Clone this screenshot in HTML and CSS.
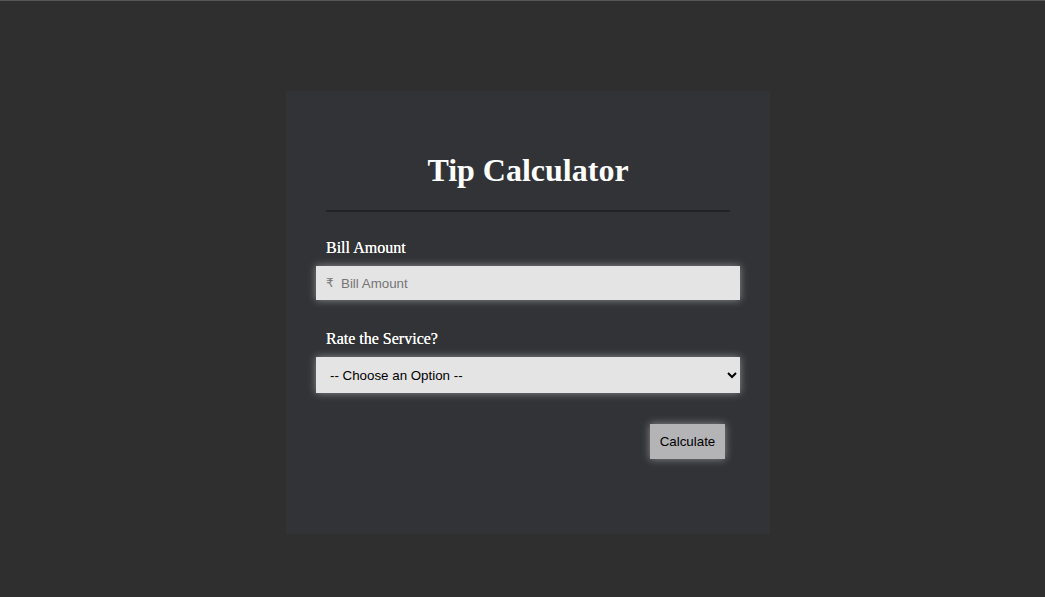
FILE: index.html
```html
<!DOCTYPE html>
<html>
<head>
<meta charset="utf-8">
<title>Tip Calculator</title>
<link rel="stylesheet" href="styles.css">
</head>
<body>
<div class="page">
  <div class="card">
    <h1 class="title">Tip Calculator</h1>
    <hr class="rule">
    <label class="label" for="bill">Bill Amount</label>
    <div class="field">
      <span class="currency">₹</span>
      <input id="bill" class="input" type="text" placeholder="Bill Amount">
    </div>
    <label class="label label-second" for="rate">Rate the Service?</label>
    <select id="rate" class="select">
      <option>-- Choose an Option --</option>
    </select>
    <div class="actions">
      <button class="btn" type="button">Calculate</button>
    </div>
  </div>
</div>
</body>
</html>
```

FILE: styles.css
```css
html, body {
  margin: 0;
  padding: 0;
  background: #2f2f2f;
}
body {
  border-top: 1px solid #575757;
  height: 596px;
  font-family: "Liberation Serif", "Times New Roman", serif;
}
.page {
  display: flex;
  justify-content: center;
  padding: 90px 0 0 11px;
}
.card {
  width: 484px;
  height: 443px;
  box-sizing: border-box;
  padding: 61px 40px 0 40px;
  background: #323337;
  display: flex;
  flex-direction: column;
}
.title {
  margin: 0;
  font-size: 32px;
  font-weight: bold;
  color: #ffffff;
  text-align: center;
  line-height: 37px;
}
.rule {
  margin: 21px 0 0 0;
  border: 0;
  height: 2px;
  background: #222326;
}
.label {
  margin-top: 27px;
  font-size: 16px;
  color: #ffffff;
  line-height: 18px;
  text-shadow: 0 0 0.4px #fff;
}
.label-second {
  margin-top: 30px;
}
.field {
  margin: 9px -10px 0 -10px;
  height: 34px;
  background: #e4e4e4;
  box-shadow: 0 0 8px rgba(255, 255, 255, 0.45);
  display: flex;
  align-items: center;
  padding-left: 10px;
}
.currency {
  font-family: "DejaVu Sans", sans-serif;
  font-size: 12px;
  color: #757575;
  width: 15px;
}
.input {
  flex: 1;
  border: 0;
  outline: none;
  background: transparent;
  font-family: "Liberation Sans", Arial, sans-serif;
  font-size: 13.33px;
  color: #000;
  padding: 0;
  height: 34px;
}
.input::placeholder {
  color: #757575;
}
.select {
  margin: 9px -10px 0 -10px;
  height: 36px;
  border: 0;
  background: #e4e4e4;
  box-shadow: 0 0 8px rgba(255, 255, 255, 0.45);
  font-family: "Liberation Sans", Arial, sans-serif;
  font-size: 13.33px;
  color: #000;
  padding: 0 10px;
  outline: none;
}
.actions {
  display: flex;
  justify-content: flex-end;
  margin-top: 31px;
  padding-right: 5px;
}
.btn {
  width: 75px;
  height: 35px;
  border: 0;
  background: #b4b4b6;
  box-shadow: 0 0 8px rgba(255, 255, 255, 0.45);
  font-family: "Liberation Sans", Arial, sans-serif;
  font-size: 13.33px;
  color: #000;
  padding: 0;
}
```
